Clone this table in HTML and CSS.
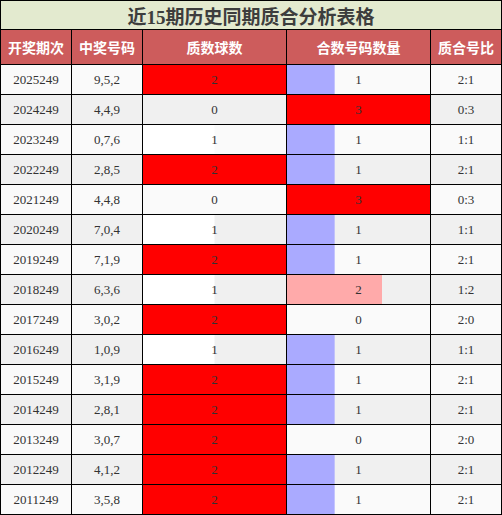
FILE: index.html
```html
<!DOCTYPE html>
<html lang="zh-CN">
<head>
    <meta charset="UTF-8">
    <title>近15期历史同期质合分析表格</title>
    <link rel="stylesheet" href="styles.css">
</head>
<body>
    <table class="analysis">
        <colgroup>
            <col class="col-narrow">
            <col class="col-narrow">
            <col class="col-wide">
            <col class="col-wide">
            <col class="col-narrow">
        </colgroup>
        <thead>
            <tr class="title-row">
                <th colspan="5">近15期历史同期质合分析表格</th>
            </tr>
            <tr class="head-row">
                <th>开奖期次</th>
                <th>中奖号码</th>
                <th>质数球数</th>
                <th>合数号码数量</th>
                <th>质合号比</th>
            </tr>
        </thead>
        <tbody>
            <tr><td>2025249</td><td>9,5,2</td><td class="bar bar-red" style="background-size: 100% 100%">2</td><td class="bar bar-blue" style="background-size: 33.33% 100%">1</td><td>2:1</td></tr>
            <tr><td>2024249</td><td>4,4,9</td><td>0</td><td class="bar bar-red" style="background-size: 100% 100%">3</td><td>0:3</td></tr>
            <tr><td>2023249</td><td>0,7,6</td><td class="bar bar-white" style="background-size: 50% 100%">1</td><td class="bar bar-blue" style="background-size: 33.33% 100%">1</td><td>1:1</td></tr>
            <tr><td>2022249</td><td>2,8,5</td><td class="bar bar-red" style="background-size: 100% 100%">2</td><td class="bar bar-blue" style="background-size: 33.33% 100%">1</td><td>2:1</td></tr>
            <tr><td>2021249</td><td>4,4,8</td><td>0</td><td class="bar bar-red" style="background-size: 100% 100%">3</td><td>0:3</td></tr>
            <tr><td>2020249</td><td>7,0,4</td><td class="bar bar-white" style="background-size: 50% 100%">1</td><td class="bar bar-blue" style="background-size: 33.33% 100%">1</td><td>1:1</td></tr>
            <tr><td>2019249</td><td>7,1,9</td><td class="bar bar-red" style="background-size: 100% 100%">2</td><td class="bar bar-blue" style="background-size: 33.33% 100%">1</td><td>2:1</td></tr>
            <tr><td>2018249</td><td>6,3,6</td><td class="bar bar-white" style="background-size: 50% 100%">1</td><td class="bar bar-pink" style="background-size: 66.67% 100%">2</td><td>1:2</td></tr>
            <tr><td>2017249</td><td>3,0,2</td><td class="bar bar-red" style="background-size: 100% 100%">2</td><td>0</td><td>2:0</td></tr>
            <tr><td>2016249</td><td>1,0,9</td><td class="bar bar-white" style="background-size: 50% 100%">1</td><td class="bar bar-blue" style="background-size: 33.33% 100%">1</td><td>1:1</td></tr>
            <tr><td>2015249</td><td>3,1,9</td><td class="bar bar-red" style="background-size: 100% 100%">2</td><td class="bar bar-blue" style="background-size: 33.33% 100%">1</td><td>2:1</td></tr>
            <tr><td>2014249</td><td>2,8,1</td><td class="bar bar-red" style="background-size: 100% 100%">2</td><td class="bar bar-blue" style="background-size: 33.33% 100%">1</td><td>2:1</td></tr>
            <tr><td>2013249</td><td>3,0,7</td><td class="bar bar-red" style="background-size: 100% 100%">2</td><td>0</td><td>2:0</td></tr>
            <tr><td>2012249</td><td>4,1,2</td><td class="bar bar-red" style="background-size: 100% 100%">2</td><td class="bar bar-blue" style="background-size: 33.33% 100%">1</td><td>2:1</td></tr>
            <tr><td>2011249</td><td>3,5,8</td><td class="bar bar-red" style="background-size: 100% 100%">2</td><td class="bar bar-blue" style="background-size: 33.33% 100%">1</td><td>2:1</td></tr>
        </tbody>
    </table>
</body>
</html>
```

FILE: styles.css
```css
/* Global Styles */
* {
    box-sizing: border-box;
    margin: 0;
    padding: 0;
}
body {
    font-family: 'Liberation Serif', 'Noto Sans CJK SC', serif;
    background: #fff;
}
/* Table */
.analysis {
    width: 502px;
    table-layout: fixed;
    border-collapse: collapse;
    color: #333;
}
.col-narrow {
    width: 71px;
}
.col-wide {
    width: 144px;
}
.analysis th,
.analysis td {
    border: 1px solid #000;
    text-align: center;
    vertical-align: middle;
}
.title-row th {
    height: 29px;
    background: #e3eacf;
    color: #3d3d3d;
    font-size: 19px;
    font-weight: bold;
}
.head-row th {
    height: 35px;
    background: #cd5c5c;
    color: #fff;
    font-family: 'Noto Sans CJK SC', sans-serif;
    font-size: 14px;
    font-weight: bold;
}
.analysis tbody tr {
    height: 30px;
    background: #fafafa;
}
.analysis tbody tr:nth-child(even) {
    background: #f0f0f0;
}
.analysis td {
    font-size: 13px;
}
/* Bars drawn behind the counts, width set per cell */
.bar {
    background-repeat: no-repeat;
    background-position: left center;
}
.bar-red {
    background-image: linear-gradient(#ff0000, #ff0000);
}
.bar-white {
    background-image: linear-gradient(#ffffff, #ffffff);
}
.bar-blue {
    background-image: linear-gradient(#aaaaff, #aaaaff);
}
.bar-pink {
    background-image: linear-gradient(#ffaaaa, #ffaaaa);
}
```
